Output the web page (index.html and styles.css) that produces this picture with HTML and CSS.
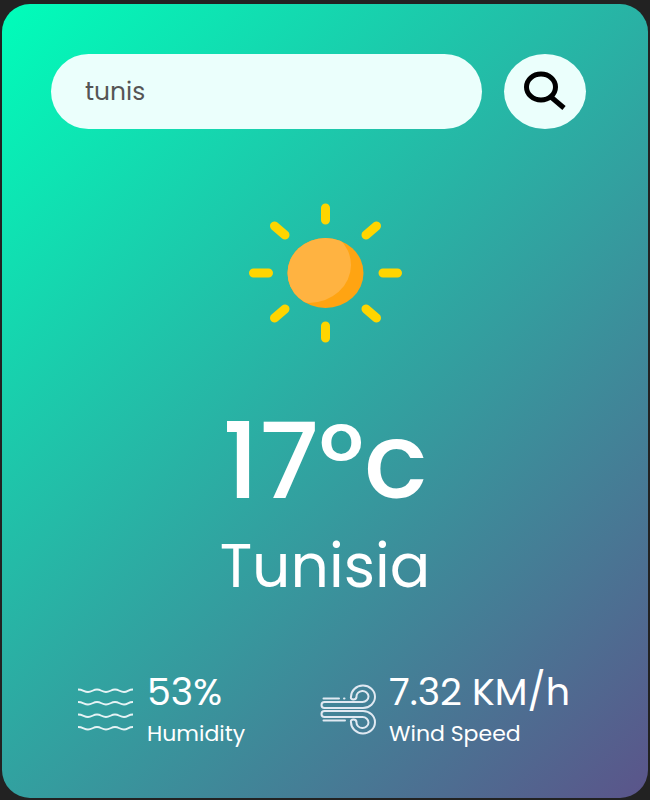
FILE: index.html
```html
<!DOCTYPE html>
<html lang="en">
<head>
<meta charset="utf-8">
<meta name="viewport" content="width=device-width, initial-scale=1">
<title>Weather</title>
<link rel="stylesheet" href="styles.css">
</head>
<body>
<main class="card">
  <form class="search" role="search">
    <input class="search-input" type="text" value="tunis" aria-label="City name" spellcheck="false">
    <button class="search-button" type="button" aria-label="Search">
      <svg class="search-icon" viewBox="0 0 42 42" aria-hidden="true">
        <ellipse cx="17" cy="16" rx="14.5" ry="13" fill="none" stroke="#000" stroke-width="5"/>
        <path d="M27 26L40 37" stroke="#000" stroke-width="5"/>
      </svg>
    </button>
  </form>
  <section class="weather">
    <svg class="sun" viewBox="0 0 154 140" aria-hidden="true">
      <clipPath id="disc"><ellipse cx="77.500" cy="70" rx="38" ry="35"/></clipPath>
      <ellipse cx="77.500" cy="70" rx="38" ry="35" fill="#ffa412"/>
      <ellipse cx="61" cy="62" rx="42" ry="38" fill="#ffb341" clip-path="url(#disc)"/>
      <g stroke="#ffd500" stroke-width="9" stroke-linecap="round">
        <path d="M77.500 5V17M77.500 123V135M5.500 70H20.500M135 70H149.500M26.500 23L37 32M128.500 23L118 32M26.500 115L37 106M128.500 115L118 106"/>
      </g>
    </svg>
    <h1 class="temp">17°c</h1>
    <h2 class="city">Tunisia</h2>
  </section>
  <section class="details">
    <div class="detail">
      <svg class="detail-icon" viewBox="0 0 56 56" fill="none" stroke="#e6f3f5" stroke-width="1.800" aria-hidden="true">
        <path d="M0 8.500C5 8.500 6 11 10 11S15 8.500 19 8.500S24 11 28 11S33 8.500 37 8.500S42 11 46 11S50 8.500 55 8.500"/>
        <path d="M0 21C5 21 6 23.500 10 23.500S15 21 19 21S24 23.500 28 23.500S33 21 37 21S42 23.500 46 23.500S50 21 55 21"/>
        <path d="M0 33.500C5 33.500 6 36 10 36S15 33.500 19 33.500S24 36 28 36S33 33.500 37 33.500S42 36 46 36S50 33.500 55 33.500"/>
        <path d="M0 46C5 46 6 48.500 10 48.500S15 46 19 46S24 48.500 28 48.500S33 46 37 46S42 48.500 46 48.500S50 46 55 46"/>
      </svg>
      <div>
        <p class="value">53%</p>
        <p class="label">Humidity</p>
      </div>
    </div>
    <div class="detail">
      <svg class="detail-icon" viewBox="0 0 56 56" fill="none" stroke="#e0e9f2" stroke-width="2" stroke-linecap="round" stroke-linejoin="round" aria-hidden="true">
        <path d="M4.500 27H43A12 11.200 0 1 0 31 16C30 19 36 19.500 36.500 16A6 5.500 0 1 1 42.500 21H4.500A3 3 0 0 0 4.500 27Z"/>
        <path d="M4.500 30H43A12 11.200 0 1 1 31 41C30 38 36 37.500 36.500 41A6 5.500 0 1 0 42.500 36H4.500A3 3 0 0 1 4.500 30Z"/>
        <path d="M3.500 17.500H19M24 17.500H24.500M3.500 39.500H25"/>
      </svg>
      <div>
        <p class="value">7.32 KM/h</p>
        <p class="label">Wind Speed</p>
      </div>
    </div>
  </section>
</main>
</body>
</html>
```
FILE: styles.css
```css
* {
  box-sizing: border-box;
  margin: 0;
  padding: 0;
}

body {
  min-height: 100vh;
  display: flex;
  padding: 4px 2px 2px;
  background: #222;
  font-family: Poppins, Inter, sans-serif;
}

.card {
  flex: 1;
  min-width: 0;
  padding: 50px 62px 40px 49px;
  border-radius: 28px;
  background: linear-gradient(135deg, #00feba, #5b548a);
  color: #fff;
}

.search {
  display: flex;
  gap: 22px;
}

.search-input {
  flex: 1;
  min-width: 0;
  height: 75px;
  padding: 0 34px;
  border: 0;
  border-radius: 40px;
  outline: 0;
  background: #ebfffc;
  color: #555;
  font: inherit;
  font-size: 25px;
}

.search-button {
  display: flex;
  align-items: center;
  justify-content: center;
  width: 82px;
  height: 75px;
  border: 0;
  border-radius: 50%;
  background: #ebfffc;
  cursor: pointer;
}

.search-icon {
  width: 42px;
  height: 42px;
}

.weather {
  display: flex;
  flex-direction: column;
  align-items: center;
  padding: 74px 0 0 13px;
}

.sun {
  width: 154px;
  height: 140px;
}

.temp {
  margin-top: 58px;
  font-size: 106px;
  font-weight: 500;
  line-height: 120px;
}

.city {
  margin-top: 9px;
  font-size: 60px;
  font-weight: 400;
  line-height: 72px;
}

.details {
  display: flex;
  justify-content: space-between;
  margin-top: 68px;
  padding: 0 16px 0 27px;
}

.detail {
  display: flex;
  align-items: center;
  gap: 13px;
}

.detail-icon {
  width: 56px;
  height: 56px;
}

.value {
  font-size: 38px;
  line-height: 44px;
  white-space: nowrap;
}

.label {
  margin-top: 6px;
  font-size: 22px;
  line-height: 28px;
}
```
